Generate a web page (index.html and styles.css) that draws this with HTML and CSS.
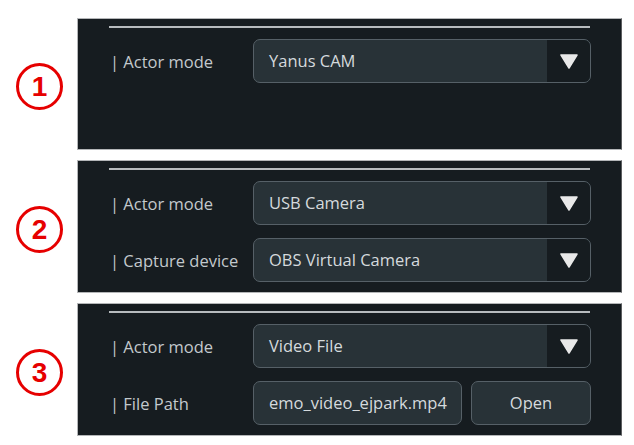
FILE: index.html
```html
<!DOCTYPE html>
<html>
<head>
<meta charset="utf-8">
<link rel="stylesheet" href="styles.css">
</head>
<body>
<div class="wrap">
  <div class="step">
    <div class="badge">1</div>
    <div class="panel panel-tall">
      <div class="sep"></div>
      <div class="rows">
        <div class="row">
          <div class="label">| Actor mode</div>
          <div class="select"><span class="value">Yanus CAM</span><span class="arrow"><svg width="18" height="15" viewBox="0 0 18 15"><path d="M1 1 H17 L9 14 Z" fill="#e9e9e9" stroke="#e9e9e9" stroke-width="1.5" stroke-linejoin="round"/></svg></span></div>
        </div>
      </div>
    </div>
  </div>
  <div class="step">
    <div class="badge">2</div>
    <div class="panel">
      <div class="sep"></div>
      <div class="rows">
        <div class="row">
          <div class="label">| Actor mode</div>
          <div class="select"><span class="value">USB Camera</span><span class="arrow"><svg width="18" height="15" viewBox="0 0 18 15"><path d="M1 1 H17 L9 14 Z" fill="#e9e9e9" stroke="#e9e9e9" stroke-width="1.5" stroke-linejoin="round"/></svg></span></div>
        </div>
        <div class="row">
          <div class="label">| Capture device</div>
          <div class="select"><span class="value">OBS Virtual Camera</span><span class="arrow"><svg width="18" height="15" viewBox="0 0 18 15"><path d="M1 1 H17 L9 14 Z" fill="#e9e9e9" stroke="#e9e9e9" stroke-width="1.5" stroke-linejoin="round"/></svg></span></div>
        </div>
      </div>
    </div>
  </div>
  <div class="step">
    <div class="badge">3</div>
    <div class="panel">
      <div class="sep"></div>
      <div class="rows">
        <div class="row">
          <div class="label">| Actor mode</div>
          <div class="select"><span class="value">Video File</span><span class="arrow"><svg width="18" height="15" viewBox="0 0 18 15"><path d="M1 1 H17 L9 14 Z" fill="#e9e9e9" stroke="#e9e9e9" stroke-width="1.5" stroke-linejoin="round"/></svg></span></div>
        </div>
        <div class="row">
          <div class="label">| File Path</div>
          <div class="file">
            <div class="input"><span class="path">emo_video_ejpark.mp4</span></div>
            <div class="btn">Open</div>
          </div>
        </div>
      </div>
    </div>
  </div>
</div>
</body>
</html>
```

FILE: styles.css
```css
html, body {
  margin: 0;
  padding: 0;
  background: #ffffff;
}
body {
  font-family: "Open Sans", "Noto Sans", sans-serif;
}
.wrap {
  padding: 18px 0 0 16px;
  display: flex;
  flex-direction: column;
  gap: 10px;
}
.step {
  display: flex;
  align-items: center;
  gap: 14px;
}
.badge {
  width: 41px;
  height: 41px;
  border: 3px solid #e60000;
  border-radius: 50%;
  color: #e60000;
  font-family: "Liberation Sans", Arial, sans-serif;
  font-weight: bold;
  font-size: 28px;
  line-height: 41px;
  text-align: center;
  margin-top: 5px;
}
.panel {
  box-sizing: border-box;
  width: 545px;
  background: #161c20;
  border: 1px solid #b4b6b8;
  border-right-color: #5c5e60;
  padding: 7px 30px 10px 31px;
}
.panel-tall {
  height: 132px;
}
.sep {
  height: 2px;
  background: #b7bbbe;
  margin-right: 1px;
}
.rows {
  margin-top: 11px;
  display: flex;
  flex-direction: column;
  gap: 13px;
}
.row {
  display: flex;
  align-items: center;
  height: 44px;
}
.label {
  box-sizing: border-box;
  width: 144px;
  flex: none;
  color: #c3c9cd;
  font-size: 16.5px;
  padding-left: 1px;
}
.select {
  box-sizing: border-box;
  width: 338px;
  height: 44px;
  border: 1px solid #566067;
  border-radius: 7px;
  background: #283237;
  display: flex;
  overflow: hidden;
}
.value {
  flex: 1;
  padding-left: 15px;
  line-height: 42px;
  color: #d5dadd;
  font-size: 16.5px;
}
.arrow {
  width: 43px;
  background: #161c20;
  display: flex;
  align-items: center;
  justify-content: center;
}
.file {
  display: flex;
  gap: 9px;
}
.input {
  box-sizing: border-box;
  width: 209px;
  height: 44px;
  border: 1px solid #566067;
  border-radius: 7px;
  background: #283237;
  overflow: hidden;
  white-space: nowrap;
  padding-left: 15px;
  line-height: 42px;
  color: #d5dadd;
  font-size: 16.5px;
}
.btn {
  box-sizing: border-box;
  width: 120px;
  height: 44px;
  border: 1px solid #566067;
  border-radius: 7px;
  background: #283237;
  color: #d5dadd;
  font-size: 16.5px;
  line-height: 42px;
  text-align: center;
}
```
